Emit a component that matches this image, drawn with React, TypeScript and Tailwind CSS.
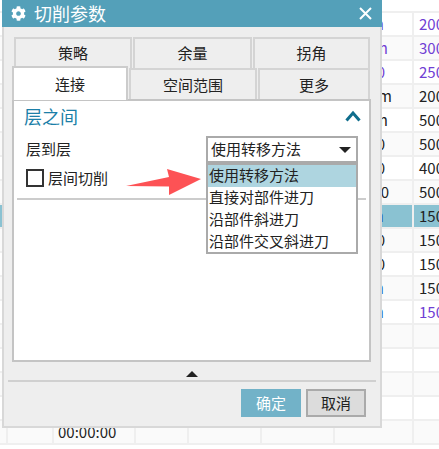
import { FaCog } from "react-icons/fa";

const font = "font-['Noto_Sans_CJK_SC','Noto_Sans',sans-serif]";
const P = "text-[#7040d4]";
const K = "text-[#222222]";
const B = "text-[#2f5fc0]";

const rows: [string, string, string, string, string][] = [
  ["50mm", "pr-[28px]", P, "200", P],
  ["50mm", "pr-[24px]", P, "300", P],
  ["10000", "pr-[27px]", P, "250", P],
  ["50mm", "pr-[20px]", K, "200", K],
  ["50mm", "pr-[24px]", K, "500", K],
  ["10000", "pr-[27px]", K, "500", K],
  ["10000", "pr-[27px]", K, "400", K],
  ["100000", "pr-[23px]", K, "500", K],
  ["50mm", "pr-[28px]", B, "150", K],
  ["10000", "pr-[27px]", K, "150", K],
  ["10000", "pr-[27px]", K, "150", K],
  ["50mm", "pr-[28px]", B, "150", K],
  ["50mm", "pr-[28px]", B, "150", P],
  ["", "", K, "", K],
  ["", "", K, "", K],
  ["", "", K, "", K],
  ["", "", K, "", K],
  ["", "", K, "", K],
];

function Sheet() {
  const cell = "border-r-2 border-[#efefef] h-full overflow-hidden whitespace-nowrap";
  return (
    <div className="w-[439px] h-[449px] overflow-hidden bg-white text-[15px] leading-[22px]">
      <div className="h-[13px] border-b-2 border-[#efefef]" />
      {rows.map((r, i) => (
        <div
          key={i}
          className={`grid grid-cols-[8px_46px_82px_53px_73px_73px_79px_25px] h-[24px] border-b-2 border-[#efefef] ${
            i === 8 ? "bg-[#8ac2d2]" : i % 2 === 0 ? "bg-white" : "bg-[#fafafa]"
          }`}
        >
          <div className={cell} />
          <div className={cell} />
          <div className={`${cell} pl-[4px] text-[#222222]`}>{i === 17 ? "00:00:00" : ""}</div>
          <div className={cell} />
          <div className={cell} />
          <div className={cell} />
          <div className={`${cell} text-right ${r[1]} ${r[2]}`}>{r[0]}</div>
          <div className={`pl-[5px] whitespace-nowrap ${r[4]}`}>{r[3]}</div>
        </div>
      ))}
    </div>
  );
}

function Tab({ label, w, h, active }: { label: string; w: string; h: string; active?: boolean }) {
  return (
    <div
      className={`${w} ${h} flex items-center justify-center text-[15px] text-[#222222] border-2 border-b-0 ${
        active ? "bg-white border-[#cccccc] relative z-10" : "bg-[#eeeeee] border-[#d4d4d4]"
      }`}
    >
      {label}
    </div>
  );
}

function Dialog() {
  return (
    <div className="absolute left-[2px] top-0 w-[380px] h-[428px] bg-[#eeeeee] border-2 border-t-0 border-[#d8d8d8] flex flex-col">
      <div className="h-[27px] -mx-[2px] bg-[#54a0b9] flex items-center pl-[9px] pr-[10px] text-white">
        <FaCog className="w-[15px] h-[15px]" />
        <span className="ml-[8px] text-[18px] leading-[27px]">切削参数</span>
        <svg className="ml-auto" width="13" height="13" viewBox="0 0 13 13">
          <path d="M1 1 L12 12 M12 1 L1 12" stroke="#fff" strokeWidth="2" fill="none" />
        </svg>
      </div>

      <div className="mt-[10px] ml-[10px] flex gap-px">
        <Tab label="策略" w="w-[118px]" h="h-[31px]" />
        <Tab label="余量" w="w-[119px]" h="h-[31px]" />
        <Tab label="拐角" w="w-[117px]" h="h-[31px]" />
      </div>

      <div className="-mt-[2px] ml-[8px] flex items-end gap-px relative">
        <Tab label="连接" w="w-[116px]" h="h-[34px]" active />
        <Tab label="空间范围" w="w-[128px]" h="h-[32px]" />
        <Tab label="更多" w="w-[112px]" h="h-[32px]" />
      </div>

      <div className="-mt-px ml-[8px] w-[359px] h-[263px] bg-white border-2 border-[#c4c4c4] relative">
        <div className="flex items-center justify-between pl-[10px] pr-[8px] pt-[2px]">
          <span className="text-[18px] leading-[26px] text-[#1c7fa8]">层之间</span>
          <svg width="16" height="12" viewBox="0 0 16 12">
            <path d="M1.5 10.5 L8 3 L14.5 10.5" stroke="#0f6d8c" strokeWidth="3" fill="none" />
          </svg>
        </div>

        <div className="flex items-center mt-[7px] pl-[12px] text-[15px] text-[#222222]">
          <span className="w-[180px]">层到层</span>
          <div className="w-[152px] h-[27px] border-2 border-[#aaaaaa] flex items-center justify-between pl-[3px] pr-[5px] bg-white">
            <span>使用转移方法</span>
            <span className="w-0 h-0 border-x-[6px] border-x-transparent border-t-[6px] border-t-[#222222]" />
          </div>
        </div>

        <label className="flex items-center mt-[6px] pl-[12px] text-[15px] text-[#222222]">
          <span className="w-[18px] h-[18px] border-2 border-[#333333] bg-white" />
          <span className="ml-[4px] leading-[18px]">层间切削</span>
        </label>

        <div className="mt-[11px] mx-[3px] h-[2px] bg-[#cccccc]" />

        <div className="absolute left-[192px] top-[62px] w-[152px] h-[91px] bg-white border-2 border-[#aaaaaa] text-[15px] leading-[20px] text-[#222222] z-20">
          <div className="pl-px h-[22px] bg-[#aed5e0]">使用转移方法</div>
          <div className="pl-px h-[22px]">直接对部件进刀</div>
          <div className="pl-px h-[22px]">沿部件斜进刀</div>
          <div className="pl-px h-[22px]">沿部件交叉斜进刀</div>
        </div>

        <svg className="absolute left-[112px] top-[68px] z-10" width="76" height="27" viewBox="0 0 76 27">
          <path d="M0 17 L43 8 L41 0 L75 10 L43 26 L43 17.5 Z" fill="#fd5255" />
        </svg>
      </div>

      <div className="flex justify-center h-[18px] items-end">
        <span className="w-0 h-0 border-x-[6px] border-x-transparent border-b-[6px] border-b-[#222222] mb-[3px] mr-px" />
      </div>
      <div className="mx-[4px] h-[2px] bg-[#d0d0d0]" />
      <div className="flex justify-end gap-[5px] mt-[7px] pr-[14px] text-[15px]">
        <div className="w-[60px] h-[28px] bg-[#72b2c8] text-white flex items-center justify-center">确定</div>
        <div className="w-[60px] h-[28px] bg-[#dcdcdc] border-2 border-[#aaaaaa] text-[#222222] flex items-center justify-center">取消</div>
      </div>
    </div>
  );
}

export default function App() {
  return (
    <div className={`relative w-[439px] h-[449px] overflow-hidden ${font}`}>
      <Sheet />
      <Dialog />
    </div>
  );
}
